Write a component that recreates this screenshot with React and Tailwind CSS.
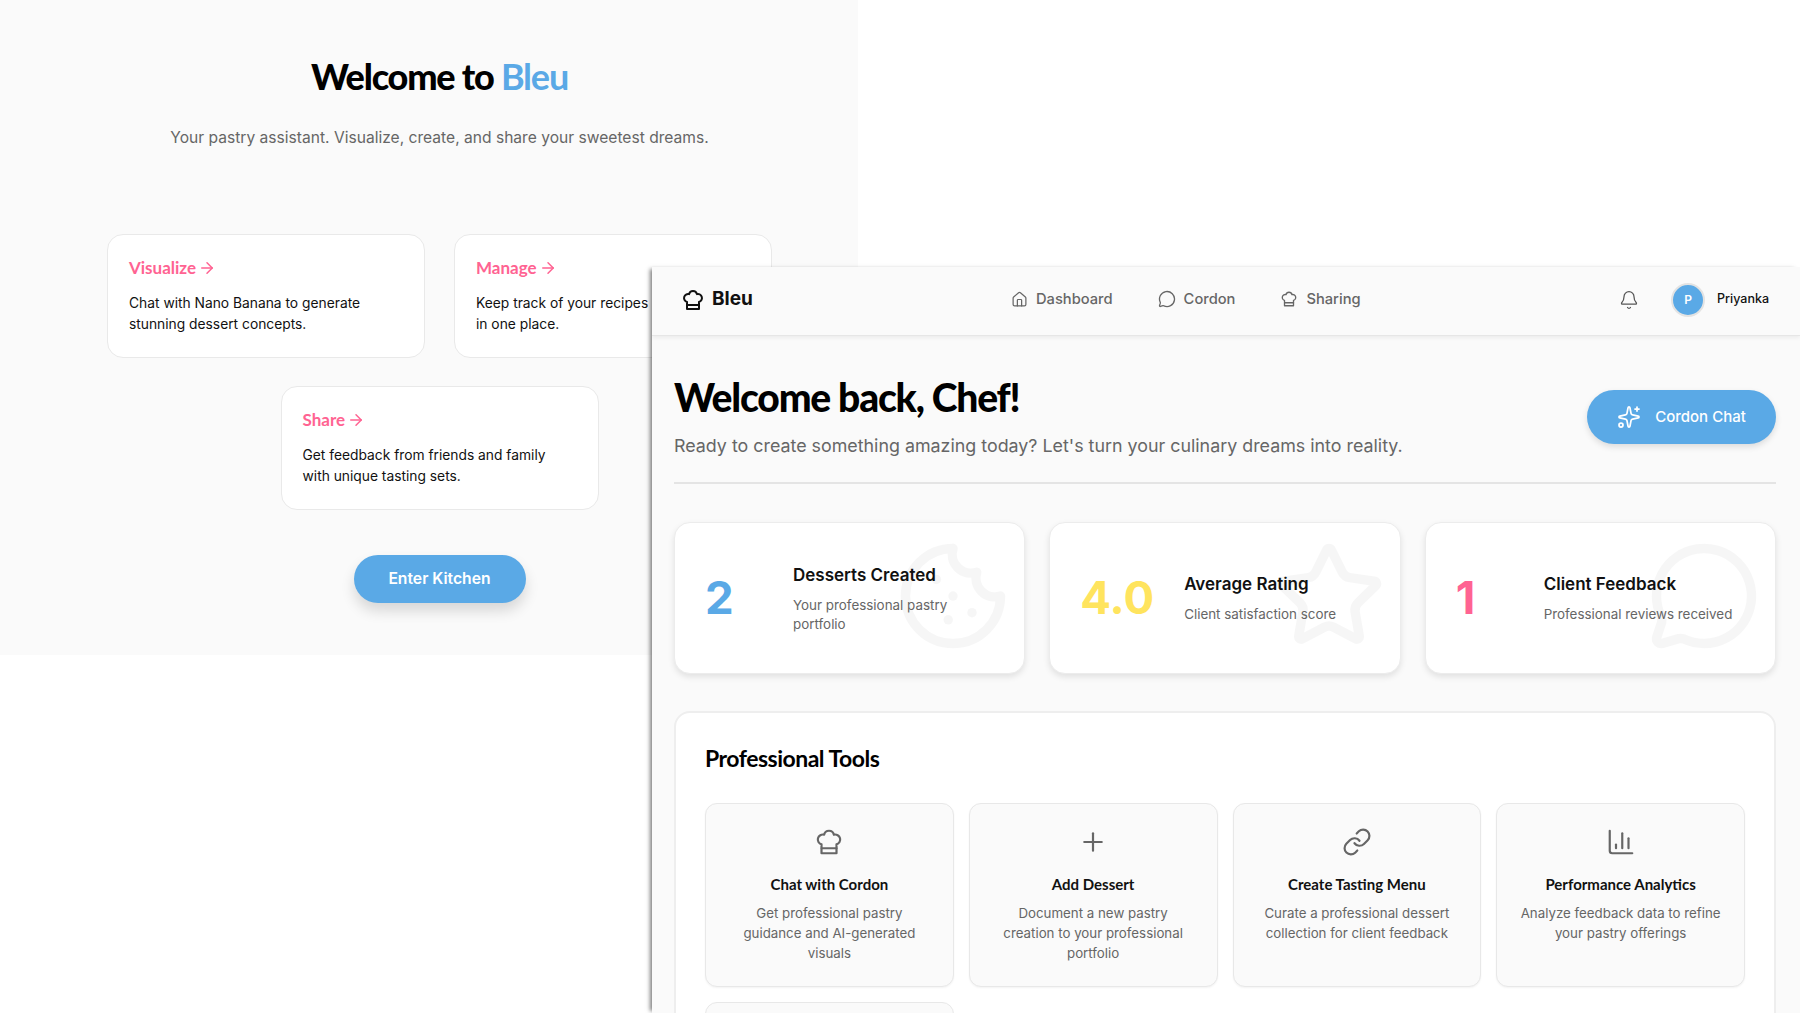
import { ArrowRight, Bell, ChartColumn, Cookie, House, Link, MessageCircle, Plus, Sparkles, Star } from "lucide-react"
import { TbChefHat } from "react-icons/tb"

const features = [
  { title: "Visualize", text: ["Chat with Nano Banana to generate", "stunning dessert concepts."] },
  { title: "Manage", text: ["Keep track of your recipes and ideas", "in one place."] },
]

const stats = [
  { value: "2", color: "text-[#5aa9e6]", title: "Desserts Created", text: "Your professional pastry portfolio", Icon: Cookie },
  { value: "4.0", color: "text-[#ffe45e]", title: "Average Rating", text: "Client satisfaction score", Icon: Star },
  { value: "1", color: "text-[#ff6392]", title: "Client Feedback", text: "Professional reviews received", Icon: MessageCircle },
]

const tools = [
  { title: "Chat with Cordon", text: "Get professional pastry guidance and AI-generated visuals", Icon: TbChefHat },
  { title: "Add Dessert", text: "Document a new pastry creation to your professional portfolio", Icon: Plus },
  { title: "Create Tasting Menu", text: "Curate a professional dessert collection for client feedback", Icon: Link },
  { title: "Performance Analytics", text: "Analyze feedback data to refine your pastry offerings", Icon: ChartColumn },
]

function FeatureCard({ title, text }) {
  return (
    <div className="h-[124px] w-[318px] rounded-2xl border border-[#e9e9e9] bg-white px-[21px] pt-[22px]">
      <p className="flex items-center gap-[2px] font-['Lato'] text-[17px] font-bold leading-[22px] text-[#ff6392]">
        {title}
        <ArrowRight size={18} strokeWidth={2} />
      </p>
      <p className="mt-[14px] text-[13.8px] leading-[21px] text-[#111]">
        {text[0]}
        <br />
        {text[1]}
      </p>
    </div>
  )
}

function Landing() {
  return (
    <section className="absolute left-0 top-0 h-[655px] w-[858px] bg-[#fafafa]">
      <div className="ml-[107px] flex w-[665px] flex-col items-center">
        <h1 className="mt-[54px] font-['Lato'] text-[36px] font-black leading-[44px] tracking-[-1.2px] text-black">
          Welcome to <span className="font-bold text-[#5aa9e6]">Bleu</span>
        </h1>
        <p className="mt-[28px] text-[15.6px] leading-6 text-[#666]">
          Your pastry assistant. Visualize, create, and share your sweetest dreams.
        </p>
        <div className="mt-[84px] flex gap-[29px]">
          {features.map((f) => (
            <FeatureCard key={f.title} {...f} />
          ))}
        </div>
        <div className="mt-[28px]">
          <FeatureCard title="Share" text={["Get feedback from friends and family", "with unique tasting sets."]} />
        </div>
        <button className="mt-[45px] h-12 w-[172px] rounded-full bg-[#5aa9e6] text-[15.7px] font-semibold text-white shadow-[0_8px_14px_rgba(0,0,0,0.14)]">
          Enter Kitchen
        </button>
      </div>
    </section>
  )
}

function Header() {
  return (
    <header className="relative flex h-[69px] shrink-0 items-center border-b border-[#e6e6e6] bg-[#fafafa] pb-[3px] pl-[29px] pr-[31px] shadow-[0_2px_4px_rgba(0,0,0,0.06)]">
      <div className="flex w-[330px] items-center gap-[7px]">
        <TbChefHat size={24} className="text-[#111]" />
        <span className="text-[19px] font-bold text-[#111]">Bleu</span>
      </div>
      <nav className="flex items-center gap-[45px] text-[14.7px] font-medium text-[#666]">
        <span className="flex items-center gap-2">
          <House size={17} strokeWidth={1.75} />
          Dashboard
        </span>
        <span className="flex items-center gap-2">
          <MessageCircle size={18} strokeWidth={1.75} />
          Cordon
        </span>
        <span className="flex items-center gap-2">
          <TbChefHat size={18} strokeWidth={1.75} />
          Sharing
        </span>
      </nav>
      <div className="ml-auto flex items-center">
        <Bell size={20} strokeWidth={1.5} className="text-[#555]" />
        <div className="ml-[32px] flex h-[34px] w-[34px] items-center justify-center rounded-full border-2 border-[#e3e3e3] bg-[#5aa9e6] text-[12px] font-semibold text-white">
          P
        </div>
        <span className="ml-[12px] text-[12.5px] font-medium text-[#111]">Priyanka</span>
      </div>
    </header>
  )
}

function StatCard({ value, color, title, text, Icon }) {
  return (
    <div className="relative flex h-[152px] items-center overflow-hidden rounded-2xl border border-[#ececec] bg-white px-[30px] shadow-[0_3px_6px_rgba(0,0,0,0.1)]">
      <Icon size={114} strokeWidth={2} className="absolute right-[14px] top-[16px] text-black/[0.035]" />
      <div className={`min-w-[58px] text-[45.5px] font-bold leading-none ${color}`}>{value}</div>
      <div className="relative ml-[30px]">
        <h3 className="text-[17px] font-semibold leading-[24px] text-[#111]">{title}</h3>
        <p className="mt-[9px] text-[13.4px] leading-[19px] text-[#666]">{text}</p>
      </div>
    </div>
  )
}

function ToolCard({ title, text, Icon }) {
  return (
    <div className="flex h-[184px] flex-col items-center rounded-xl border border-[#e8e8e8] bg-[#fafafa] px-[22px] pt-[23px] text-center shadow-[0_1px_2px_rgba(0,0,0,0.05)]">
      <Icon size={30} strokeWidth={1.75} className="text-[#666]" />
      <h4 className="mt-[17px] font-['Lato'] text-[15px] font-bold leading-[20px] text-[#111]">{title}</h4>
      <p className="mt-[9px] text-[13.3px] leading-[20px] text-[#666]">{text}</p>
    </div>
  )
}

function Dashboard() {
  return (
    <section className="absolute left-[652px] top-[267px] flex h-[746px] w-[1148px] flex-col overflow-hidden bg-[#fafafa] shadow-[-4px_0_4px_-2px_rgba(0,0,0,0.5)]">
      <Header />
      <main className="pl-[22px] pr-[24px]">
        <div className="flex items-start justify-between border-b-2 border-[#e4e4e4] pb-[22px] pt-[35px]">
          <div>
            <h1 className="font-['Lato'] text-[39px] font-black leading-[52px] tracking-[-1.2px] text-black">Welcome back, Chef!</h1>
            <p className="mt-[9px] text-[17.85px] leading-[28px] text-[#666]">
              Ready to create something amazing today? Let's turn your culinary dreams into reality.
            </p>
          </div>
          <button className="mt-[19px] flex h-[54px] w-[189px] items-center justify-center gap-[14px] rounded-full bg-[#5aa9e6] text-[15px] font-medium text-white shadow-[0_3px_6px_rgba(0,0,0,0.12)]">
            <Sparkles size={24} strokeWidth={1.75} />
            Cordon Chat
          </button>
        </div>

        <div className="mt-[38px] grid grid-cols-3 gap-[24px]">
          {stats.map((s) => (
            <StatCard key={s.title} {...s} />
          ))}
        </div>

        <div className="mt-[37px] rounded-2xl border-2 border-[#eeeeee] bg-white px-[29px] pb-[30px] pt-[29px]">
          <h2 className="font-['Lato'] text-[23px] font-bold leading-[32px] tracking-[-0.5px] text-black">Professional Tools</h2>
          <div className="mt-[29px] grid grid-cols-4 gap-[15px]">
            {tools.map((t) => (
              <ToolCard key={t.title} {...t} />
            ))}
            <div className="h-[184px] rounded-xl border border-[#e8e8e8] bg-[#fafafa]" />
          </div>
        </div>
      </main>
    </section>
  )
}

export default function App() {
  return (
    <div className="relative h-[1013px] w-[1800px] overflow-hidden bg-white font-['Inter',sans-serif]">
      <Landing />
      <Dashboard />
    </div>
  )
}
